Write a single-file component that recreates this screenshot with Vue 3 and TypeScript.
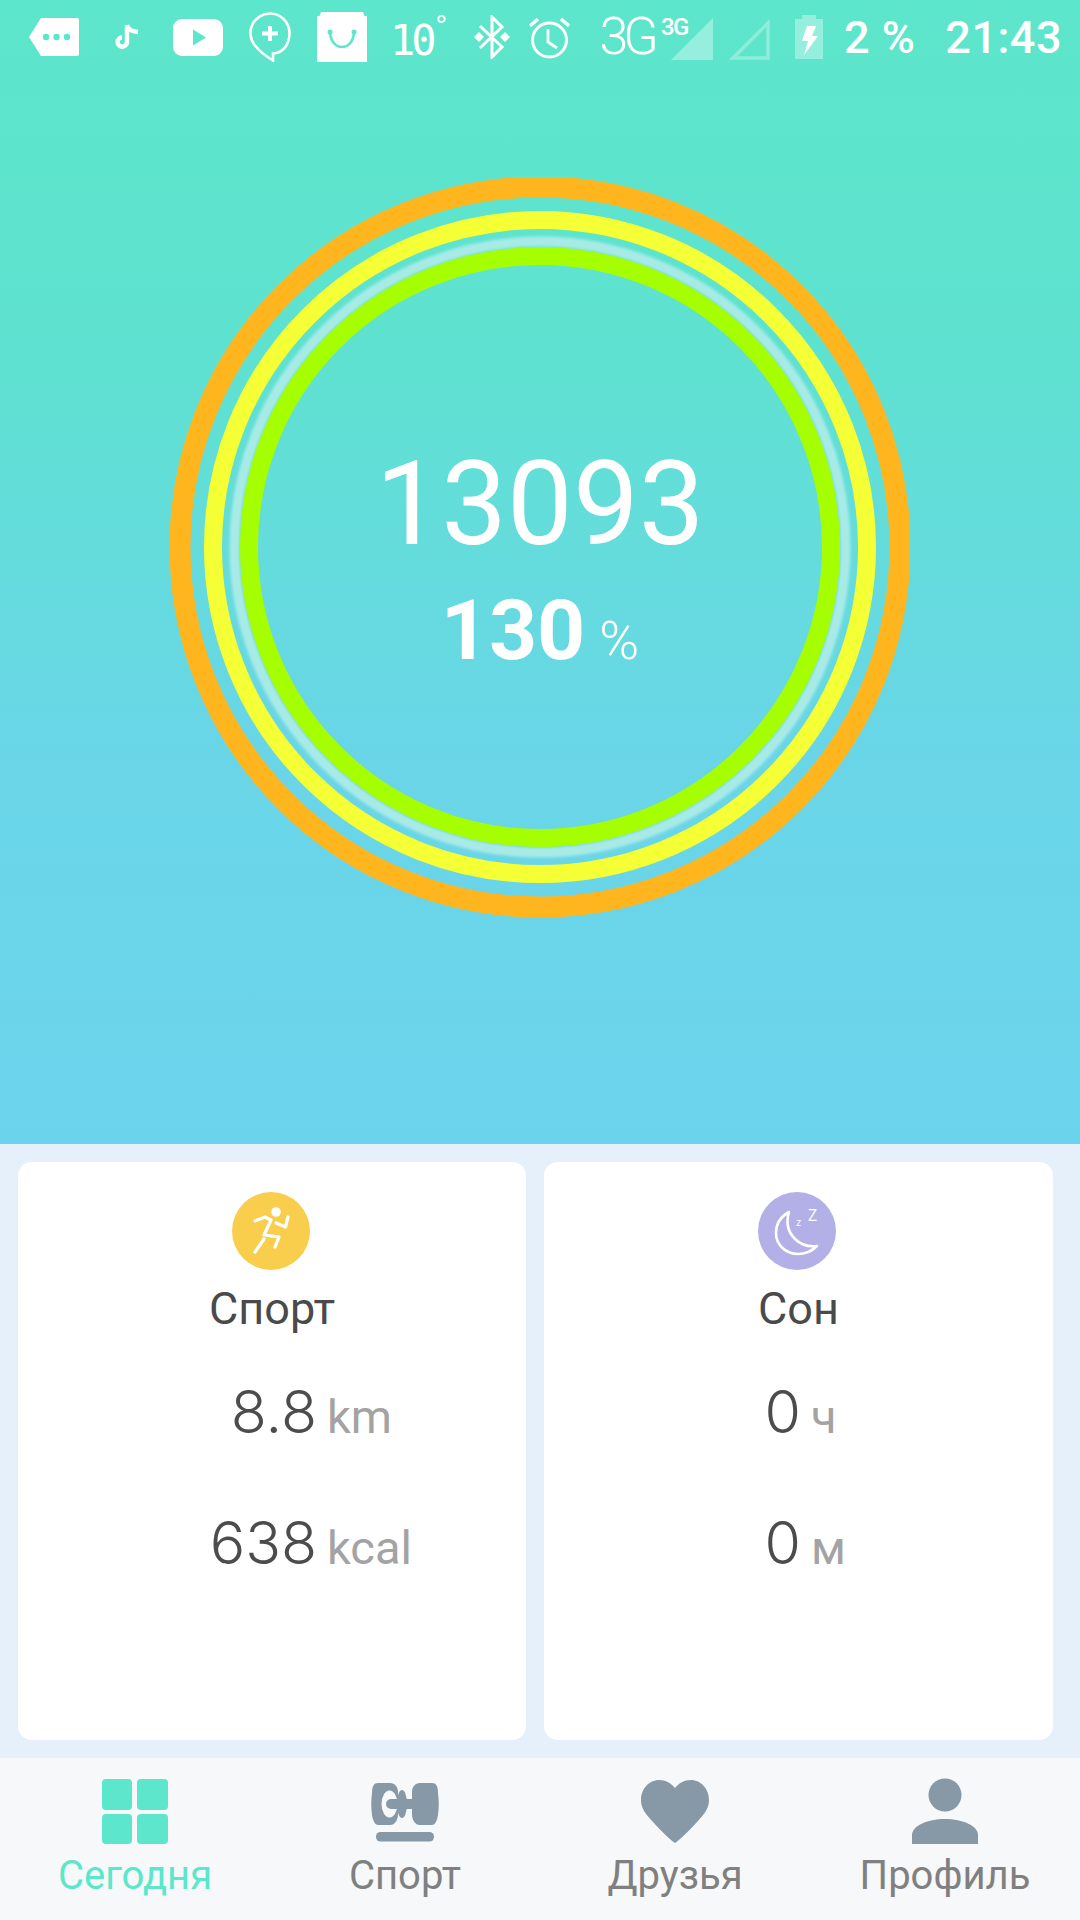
<script setup lang="ts">
interface Stat { value: string; unit: string }
interface Card { title: string; kind: 'sport' | 'sleep'; stats: Stat[] }

const rings = [
  { r: 360, w: 21, color: '#ffb61e', blur: false },
  { r: 327, w: 18, color: '#f4ff36', blur: false },
  { r: 305.5, w: 10, color: '#a8ebe6', blur: true },
  { r: 291, w: 18, color: '#a6ff00', blur: false },
]

const cards: Card[] = [
  { title: 'Спорт', kind: 'sport', stats: [{ value: '8.8', unit: 'km' }, { value: '638', unit: 'kcal' }] },
  { title: 'Сон', kind: 'sleep', stats: [{ value: '0', unit: 'ч' }, { value: '0', unit: 'м' }] },
]

const tabs = [
  { label: 'Сегодня', icon: 'today' },
  { label: 'Спорт', icon: 'sport' },
  { label: 'Друзья', icon: 'friends' },
  { label: 'Профиль', icon: 'profile' },
]
</script>

<template>
  <main class="screen">
    <section class="hero">
      <header class="status">
        <div class="status-left">
          <svg class="ic" width="50" height="38" viewBox="0 0 50 38"><path d="M0 19 12 0h36a2 2 0 0 1 2 2v34a2 2 0 0 1-2 2H12z" fill="#fff"/><circle cx="17" cy="19" r="3.200" fill="#5ce6cb"/><circle cx="27.500" cy="19" r="3.200" fill="#5ce6cb"/><circle cx="38" cy="19" r="3.200" fill="#5ce6cb"/></svg>
          <svg class="ic tiktok" width="25" height="29" viewBox="0 0 25 29"><path d="M13 2v17a4.700 4.700 0 1 1-5-4.700" fill="none" stroke="#fff" stroke-width="4.400"/><path d="M13 2c1 4 4 6.500 11 7" fill="none" stroke="#fff" stroke-width="4.400"/></svg>
          <svg class="ic yt" width="50" height="37" viewBox="0 0 50 37"><rect width="50" height="37" rx="9" fill="#fff"/><path d="M20 10.500v16L33 18.500z" fill="#5ce6cb"/></svg>
          <svg class="ic bubble" width="42" height="50" viewBox="0 0 42 50"><path d="M21 1.500a19.500 19.500 0 0 0-15 32c4 5 13 12 18 15v-7c10-.500 16.500-9 16.500-20.500A19.500 19.500 0 0 0 21 1.500z" fill="none" stroke="#fff" stroke-width="2.600"/><path d="M21 14v15M13 21.500h16" stroke="#fff" stroke-width="4" fill="none"/></svg>
          <svg class="ic shop" width="50" height="50" viewBox="0 0 50 50"><path d="M4 0h42l1.500 4H50v46H0V4h2.500z" fill="#fff"/><path d="M13 21c1 9 6 14 12 14s11-5 12-14" fill="none" stroke="#5ce6cb" stroke-width="2.500"/><circle cx="13" cy="20" r="2.500" fill="#5ce6cb"/><circle cx="37" cy="20" r="2.500" fill="#5ce6cb"/></svg>
          <span class="temp">10<sup>°</sup></span>
        </div>
        <div class="status-right">
          <svg class="ic bt" width="38" height="44" viewBox="0 0 38 44"><path d="M7 11 29 32 19 42V2l10 10L7 33" fill="none" stroke="#fff" stroke-width="3"/><path d="M1 22l5-5 5 5-5 5zM27 22l5-5 5 5-5 5z" fill="#fff"/></svg>
          <svg class="ic alarm" width="41" height="44" viewBox="0 0 41 44"><circle cx="20.500" cy="25" r="17" fill="none" stroke="#fff" stroke-width="3"/><path d="M19 14v13l9 6" fill="none" stroke="#fff" stroke-width="2.800"/><path d="M1 11l8-7M40 11l-8-7" stroke="#fff" stroke-width="3.500" fill="none"/></svg>
          <span class="net">3G<sup>3G</sup></span>
          <svg class="ic sig1" width="42" height="42" viewBox="0 0 42 42"><path d="M0 42 42 0v42z" fill="#fff" fill-opacity=".35"/></svg>
          <svg class="ic sig2" width="42" height="42" viewBox="0 0 42 42"><path d="M5 40 40 5v35z" fill="none" stroke="#fff" stroke-opacity=".3" stroke-width="3.500"/></svg>
          <svg class="ic batt" width="28" height="44" viewBox="0 0 28 44"><path d="M7 0h14v4h7v40H0V4h7z" fill="#fff" fill-opacity=".35"/><path d="M12 11h9l-4 10h6L9 40l4-14H7z" fill="#fff"/></svg>
          <span class="pct">2 %</span>
          <span class="clock">21:43</span>
        </div>
      </header>

      <div class="dial">
        <svg class="rings" width="740" height="740" viewBox="0 0 740 740">
          <defs>
            <filter id="soft" x="-5%" y="-5%" width="110%" height="110%"><feGaussianBlur stdDeviation="1.500" /></filter>
          </defs>
          <circle
            v-for="ring in rings"
            :key="ring.r"
            cx="370"
            cy="370"
            :r="ring.r"
            fill="none"
            :stroke="ring.color"
            :stroke-width="ring.w"
            :filter="ring.blur ? 'url(#soft)' : undefined"
          />
        </svg>
        <div class="dial-text">
          <div class="steps">13093</div>
          <div class="percent"><b>130</b><span>%</span></div>
        </div>
      </div>
    </section>

    <section class="cards">
      <article v-for="card in cards" :key="card.title" class="card" :class="card.kind">
        <div class="badge">
          <svg v-if="card.kind === 'sport'" width="78" height="78" viewBox="0 0 78 78">
            <circle cx="44" cy="20" r="4.800" fill="#fff" />
            <g fill="none" stroke="#fff" stroke-width="3.200" stroke-linecap="round" stroke-linejoin="round">
              <path d="M23 29l10-4 6 3-7 15 15 2-4 10" />
              <path d="M44 31l9.500 4 2.500-10" />
              <path d="M32 47 23 60" />
            </g>
          </svg>
          <svg v-else width="78" height="78" viewBox="0 0 78 78">
            <path d="M31 20C22 25 18 33 18 41c0 12 10 21 22 21 8 0 14-3 19-8-9 1-16-1-22-7-7-7-9-17-6-27z" fill="none" stroke="#fff" stroke-width="2.600" stroke-linejoin="round" />
            <text x="38" y="34" class="zz small">z</text>
            <text x="50" y="29" class="zz">Z</text>
          </svg>
        </div>
        <h2 class="title">{{ card.title }}</h2>
        <div class="stats">
          <div v-for="stat in card.stats" :key="stat.unit" class="stat">
            <span class="value">{{ stat.value }}</span>
            <span class="unit">{{ stat.unit }}</span>
          </div>
        </div>
      </article>
    </section>

    <nav class="tabs">
      <div v-for="(tab, i) in tabs" :key="tab.label" class="tab" :class="{ active: i === 0 }">
        <svg class="tab-icon" width="70" height="68" viewBox="0 0 70 68">
          <g v-if="tab.icon === 'today'" fill="#5ce6cb">
            <rect x="2" y="1" width="30" height="31" rx="4" />
            <rect x="37" y="1" width="31" height="31" rx="4" />
            <rect x="2" y="36" width="30" height="30" rx="4" />
            <rect x="37" y="36" width="31" height="30" rx="4" />
          </g>
          <g v-else-if="tab.icon === 'sport'" fill="#8798a6">
            <path d="M50 5h12c4 0 6 3 6 10 1 7 1 15 0 22-1 6-3 10-6 10H50c-5 0-8-5-8-11V14c0-5 3-9 8-9z" />
            <path d="M20 5H8C4 5 2 8 2 15c-1 7-1 15 0 22 1 6 3 10 6 10h12c5 0 8-5 8-11V14c0-5-3-9-8-9z" />
            <ellipse cx="19.500" cy="26" rx="8" ry="13.500" fill="#f7f8f9" />
            <ellipse cx="32" cy="26" rx="5" ry="14" />
            <rect x="16" y="21" width="30" height="10" rx="5" />
            <rect x="6" y="54" width="58" height="9.500" rx="4.500" />
          </g>
          <path v-else-if="tab.icon === 'friends'" fill="#8798a6" d="M35 65c-3-2-12-10-22-21C6 36 1 31 1 22 1 11 9 2 19 2c7 0 12 3 16 8 4-5 9-8 16-8 10 0 18 9 18 20 0 9-5 14-12 22-10 11-19 19-22 21z" />
          <g v-else fill="#8798a6">
            <circle cx="35" cy="17" r="16.500" />
            <path d="M2 66V57c0-9 15-16 33-16s33 7 33 16v9z" />
          </g>
        </svg>
        <span class="tab-label">{{ tab.label }}</span>
      </div>
    </nav>
  </main>
</template>

<style>
html, body { margin: 0; background: #e6f0fb; }
</style>

<style scoped>
.screen { width: 1080px; height: 1920px; display: flex; flex-direction: column; background: #e6f0fb; font-family: Roboto, "Noto Sans", sans-serif; overflow: hidden; }
.hero { height: 1144px; background: linear-gradient(180deg, #5ce6cb 0%, #5ee2d0 30%, #69d6e7 65%, #6cd3ec 100%); display: flex; flex-direction: column; align-items: center; color: #fff; }
.status { width: 100%; height: 74px; box-sizing: border-box; padding: 0 18px 0 29px; display: flex; justify-content: space-between; align-items: center; }
.status-left, .status-right { display: flex; align-items: center; }
.ic { display: block; flex: none; }
.tiktok { margin-left: 35px; }
.yt { margin-left: 34px; }
.bubble { margin-left: 26px; }
.shop { margin-left: 26px; }
.temp { margin-left: 23px; font-size: 42px; line-height: 1; font-family: "DejaVu Sans Mono", monospace; letter-spacing: -4px; margin-top: 8px; }
.temp sup { font-size: 26px; vertical-align: 20px; line-height: 0; margin-left: 1px; }
.alarm { margin-left: 18px; }
.net { margin-left: 30px; font-size: 52px; line-height: 1; font-weight: 300; letter-spacing: -5px; }
.net sup { font-size: 24px; font-weight: 500; vertical-align: 19px; line-height: 0; letter-spacing: -1.500px; margin-left: 7px; }
.sig1 { margin-left: -17px; margin-top: 4px; }
.sig2 { margin-left: 15px; margin-top: 4px; }
.batt { margin-left: 25px; }
.pct { margin-left: 21px; font-size: 45px; font-weight: 500; letter-spacing: .5px; white-space: pre; }
.clock { margin-left: 30px; font-size: 45px; font-weight: 500; letter-spacing: .5px; }

.dial { margin-top: 103px; width: 740px; height: 740px; display: grid; place-items: center; }
.rings, .dial-text { grid-area: 1 / 1; }
.dial-text { display: flex; flex-direction: column; align-items: center; margin-top: 28px; }
.steps { font-size: 117px; font-weight: 400; line-height: 136px; }
.percent { margin-top: 14px; line-height: 90px; display: flex; align-items: baseline; gap: 14px; }
.percent b { font-size: 84px; font-weight: 700; }
.percent span { font-size: 54px; font-weight: 300; }

.cards { height: 614px; box-sizing: border-box; padding: 18px 27px 18px 18px; display: grid; grid-template-columns: 508px 509px; gap: 18px; }
.card { background: #fff; border-radius: 14px; display: flex; flex-direction: column; align-items: center; padding-top: 30px; box-sizing: border-box; }
.badge { width: 78px; height: 78px; border-radius: 50%; margin-right: 3px; }
.badge svg { display: block; }
.sport .badge { background: #f8ce4c; }
.sleep .badge { background: #b2b0e6; }
.zz { font-family: "Open Sans", sans-serif; font-size: 16px; fill: #fff; }
.zz.small { font-size: 11px; }
.title { margin: 13px 0 0; font-size: 45px; font-weight: 400; line-height: 52px; color: #4a4a4a; }
.stats { align-self: stretch; margin-top: 47px; display: flex; flex-direction: column; gap: 66px; }
.stat { display: grid; grid-template-columns: 299px 1fr; column-gap: 10px; align-items: baseline; line-height: 60px; }
.sleep .stat { grid-template-columns: 257px 1fr; }
.value { font-family: Inter, sans-serif; font-size: 59px; font-weight: 300; color: #4c4c4c; text-align: right; }
.unit { font-size: 47px; color: #a3a3a3; }

.tabs { height: 162px; background: #f7f8f9; display: grid; grid-template-columns: 270px 270px 270px 270px; }
.tab { display: flex; flex-direction: column; align-items: center; padding-top: 20px; color: #808080; }
.tab-icon { display: block; }
.tab-label { font-size: 40px; line-height: 46px; margin-top: 7px; }
.tab.active { color: #5ce6cb; }
</style>
